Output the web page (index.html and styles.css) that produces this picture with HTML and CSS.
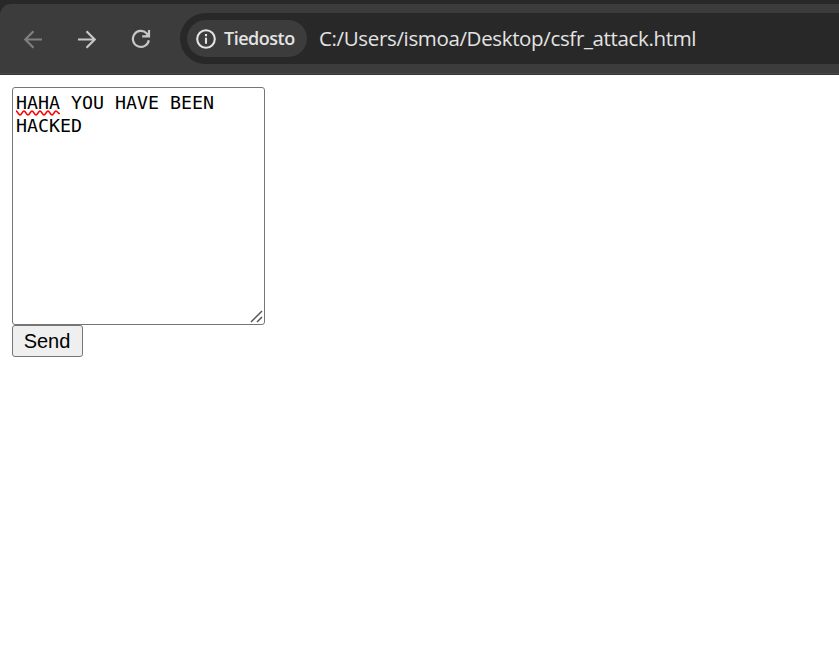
FILE: index.html
```html
<!DOCTYPE html>
<html lang="fi">
<head>
<meta charset="utf-8">
<title>csfr_attack.html</title>
<link rel="stylesheet" href="styles.css">
</head>
<body>
<header class="frame">
  <div class="toolbar">
    <nav class="nav">
      <svg class="icon dim" viewBox="0 0 20 20"><path d="M19 10.500H2.500M10.500 2.300L2.300 10.500l8.200 8.200"/></svg>
      <svg class="icon" viewBox="0 0 20 20"><path d="M1 10.500h16.500M9.500 2.300L17.700 10.500l-8.200 8.200"/></svg>
      <svg class="icon" viewBox="0 0 20 20"><path d="M17.800 11.200a8 8 0 1 1-2-6.700L18 7"/><path d="M18 1v6.300h-6.800"/><path class="solid" d="M18 3v4h-4z"/></svg>
    </nav>
    <div class="address">
      <div class="chip">
        <svg class="info" viewBox="0 0 20 20"><circle cx="10" cy="10" r="8.800"/><path d="M10 8.800v6M10 5.100v2.100"/></svg>
        <span class="chip-label">Tiedosto</span>
      </div>
      <span class="url">C:/Users/ismoa/Desktop/csfr_attack.html</span>
    </div>
  </div>
</header>
<main class="page">
  <div class="textarea">
    <div><span class="misspelled">HAHA<svg class="squiggle" viewBox="0 0 44 6"><path d="M0 1C1.500 1 2.500 5 4 5S6.500 1 8 1S10.500 5 12 5S14.500 1 16 1S18.500 5 20 5S22.500 1 24 1S26.500 5 28 5S30.500 1 32 1S34.500 5 36 5S38.500 1 40 1S42.500 5 44 3"/></svg></span> YOU HAVE BEEN</div>
    <div>HACKED</div>
    <svg class="grip" viewBox="0 0 13 13"><path d="M1 12L12 1M7 12l5-5"/></svg>
  </div>
  <button class="send" type="button">Send</button>
</main>
</body>
</html>
```
FILE: styles.css
```css
* { box-sizing: border-box; }
body {
  margin: 0;
  background: #fff;
  overflow: hidden;
}
.frame {
  height: 75px;
  padding-top: 4px;
  background: #282828;
}
.toolbar {
  display: flex;
  height: 71px;
  padding: 9px 0 10px 23px;
  background: #3c3c3c;
  border-top-left-radius: 11px;
  border-bottom: 1px solid #353535;
  box-shadow: inset 0 -1px #484848;
}
.nav {
  display: flex;
  align-items: center;
  gap: 34px;
  width: 157px;
}
.icon {
  width: 20px;
  height: 20px;
  fill: none;
  stroke: #c7c7c7;
  stroke-width: 2.2;
}
.dim { stroke: #7f7f7f; }
.solid { fill: #c7c7c7; stroke: none; }
.address {
  display: flex;
  flex: 1;
  align-items: center;
  height: 51px;
  padding-left: 7px;
  background: #282828;
  border-radius: 26px 0 0 26px;
  white-space: nowrap;
}
.chip {
  display: flex;
  align-items: center;
  width: 120px;
  height: 37px;
  margin-right: 12px;
  padding-left: 9px;
  background: #3c3c3c;
  border-radius: 19px;
}
.info {
  width: 20px;
  height: 20px;
  fill: none;
  stroke: #e3e3e3;
  stroke-width: 2.1;
}
.chip-label {
  margin: 0 0 1px 8px;
  color: #e3e3e3;
  font: 600 18px/24px "Open Sans", sans-serif;
  letter-spacing: -0.500px;
}
.url {
  margin-bottom: 2px;
  color: #e3e3e3;
  font: 400 20.500px/28px "Open Sans", sans-serif;
  letter-spacing: -0.350px;
}
.page { padding: 12px; }
.textarea {
  position: relative;
  width: 253px;
  height: 238px;
  padding: 3px;
  border: 1px solid #767676;
  border-radius: 3px;
  color: #000;
  font: 18.300px/23px "DejaVu Sans Mono", monospace;
}
.misspelled { position: relative; }
.squiggle {
  position: absolute;
  left: 0;
  top: 18px;
  width: 44px;
  height: 6px;
  fill: none;
  stroke: #f00;
  stroke-width: 1.500;
}
.grip {
  position: absolute;
  right: 1px;
  bottom: 1px;
  width: 13px;
  height: 13px;
  fill: none;
  stroke: #555;
  stroke-width: 1.500;
}
.send {
  display: block;
  width: 71px;
  height: 32px;
  padding: 0 1px 0 0;
  border: 1px solid #767676;
  border-radius: 3px;
  background: #efefef;
  color: #000;
  font: 20px/30px "Liberation Sans", sans-serif;
}
```
